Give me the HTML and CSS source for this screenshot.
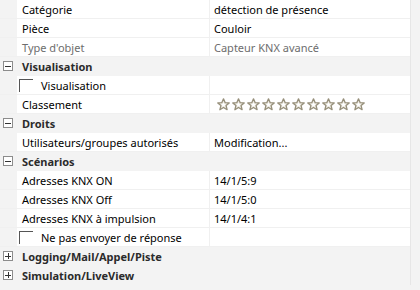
FILE: index.html
```html
<!DOCTYPE html>
<html lang="fr">
<head>
  <meta charset="UTF-8" />
  <title>Propriétés</title>
  <link rel="stylesheet" href="styles.css">
</head>
<body>
  <div class="grid">
    <div class="row"><span class="gutter"></span><span class="label">Catégorie</span><span class="value">détection de présence</span></div>
    <div class="row"><span class="gutter"></span><span class="label">Pièce</span><span class="value">Couloir</span></div>
    <div class="row muted"><span class="gutter"></span><span class="label">Type d'objet</span><span class="value">Capteur KNX avancé</span></div>

    <div class="row group"><span class="gutter minus"></span><span class="title">Visualisation</span></div>
    <div class="row"><span class="gutter"></span><span class="label check"><span class="box"></span>Visualisation</span><span class="value"></span></div>
    <div class="row"><span class="gutter"></span><span class="label">Classement</span><span class="value stars" id="stars"></span></div>

    <div class="row group"><span class="gutter minus"></span><span class="title">Droits</span></div>
    <div class="row"><span class="gutter"></span><span class="label">Utilisateurs/groupes autorisés</span><span class="value">Modification...</span></div>

    <div class="row group"><span class="gutter minus"></span><span class="title">Scénarios</span></div>
    <div class="row"><span class="gutter"></span><span class="label">Adresses KNX ON</span><span class="value">14/1/5:9</span></div>
    <div class="row"><span class="gutter"></span><span class="label">Adresses KNX Off</span><span class="value">14/1/5:0</span></div>
    <div class="row"><span class="gutter"></span><span class="label">Adresses KNX à impulsion</span><span class="value">14/1/4:1</span></div>
    <div class="row"><span class="gutter"></span><span class="label check"><span class="box"></span>Ne pas envoyer de réponse</span><span class="value"></span></div>

    <div class="row group"><span class="gutter plus"></span><span class="title">Logging/Mail/Appel/Piste</span></div>
    <div class="row group"><span class="gutter plus"></span><span class="title">Simulation/LiveView</span></div>
  </div>

  <script>
    // expand / collapse boxes
    const box = '<svg width="10" height="10" viewBox="0 0 10 10"><rect x="0.5" y="0.5" width="9" height="9" fill="#fff" stroke="#8c8c8c"/><path d="M2 5.5 H8" stroke="#333"/>';
    document.querySelectorAll('.minus').forEach(el => el.innerHTML = box + '</svg>');
    document.querySelectorAll('.plus').forEach(el => el.innerHTML = box + '<path d="M5.5 2 V8" stroke="#333"/></svg>');

    // ten empty rating stars
    const star = '<svg width="13" height="13" viewBox="0 0 13 13"><path d="M6.5 0.8 L8.1 4.6 L12.2 4.9 L9.1 7.6 L10.1 11.7 L6.5 9.5 L2.9 11.7 L3.9 7.6 L0.8 4.9 L4.9 4.6 Z" fill="#ebe8de" stroke="#968f7a" stroke-width="1.3" stroke-linejoin="round"/><path d="M6.5 4 L7.2 5.9 L9 6 L7.6 7.1 L8 8.8 L6.5 7.9 L5 8.8 L5.4 7.1 L4 6 L5.8 5.9 Z" fill="#fff"/></svg>';
    document.getElementById('stars').innerHTML = star.repeat(10);
  </script>
</body>
</html>
```

FILE: styles.css
```css
body {
  margin: 0;
  background-color: #f3f3f3;
  font-family: 'Noto Sans', 'Open Sans', sans-serif;
  font-size: 11px;
  color: #000;
  overflow: hidden;
}

.grid {
  width: 410px;
  border-right: 1px solid #e6e6e6;
  background-color: #fff;
}

.row {
  display: grid;
  grid-template-columns: 17px 193px 1fr;
  grid-template-rows: 18px;
  height: 18px;
  border-bottom: 1px solid #f0f0f0;
  line-height: 19px;
  white-space: nowrap;
}

.gutter {
  background-color: #f3f3f3;
  display: flex;
  align-items: center;
  padding-left: 3px;
}

.gutter svg {
  display: block;
}

.label {
  padding-left: 5px;
  border-right: 1px solid #f0f0f0;
  overflow: hidden;
}

.value {
  padding-left: 4px;
  overflow: hidden;
}

.muted .label,
.muted .value {
  color: #6d6d6d;
}

.group {
  background-color: #f3f3f3;
  border-bottom-color: #f3f3f3;
}

.group .title {
  grid-column: 2 / 4;
  padding-left: 5px;
  font-weight: 700;
  color: #2b2b2b;
}

.check {
  display: flex;
  align-items: center;
  padding-left: 2px;
}

.box {
  width: 13px;
  height: 12px;
  border-top: 1px solid #555;
  border-left: 1px solid #555;
  margin-right: 8px;
}

.stars {
  display: flex;
  align-items: center;
  gap: 2px;
  padding-left: 7px;
}
```
